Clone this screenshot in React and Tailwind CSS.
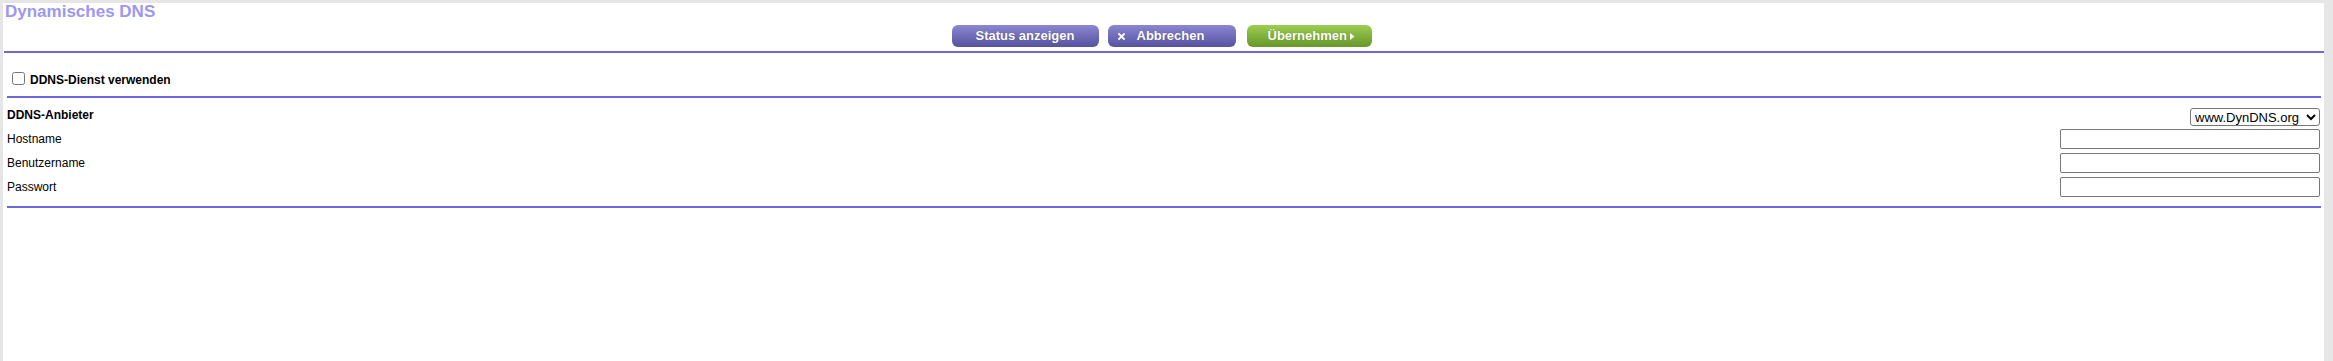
import React from "react";

const font = { fontFamily: '"Liberation Sans", Arial, sans-serif' };

export default function App() {
  return (
    <div className="h-[361px] w-[2333px] bg-[#e6e6e6] pt-[3px] pl-[3px] overflow-hidden" style={font}>
      <div className="w-[2321px] h-[358px] bg-white flex flex-col">
        <div className="pl-[2px] h-[18px] text-[17px] leading-[18px] font-bold text-[#9c97f2]">
          Dynamisches DNS
        </div>
        <div className="mt-[4px] h-[22px] flex justify-center pr-[4px]">
          <button className="w-[147px] h-[22px] rounded-[6px] bg-linear-to-b from-[#8b87d2] to-[#57529f] text-white font-bold text-[13px] leading-[22px] text-center [text-shadow:0_0_1px_rgba(0,0,0,0.35)]">
            Status anzeigen
          </button>
          <button className="ml-[9px] w-[128px] h-[22px] rounded-[6px] bg-linear-to-b from-[#8b87d2] to-[#57529f] text-white font-bold text-[13px] leading-[22px] flex items-center pl-[10px] [text-shadow:0_0_1px_rgba(0,0,0,0.35)]">
            <svg width="7" height="7" viewBox="0 0 7 7" className="mr-[12px]">
              <path d="M1 1 L6 6 M6 1 L1 6" stroke="white" strokeWidth="1.8" strokeLinecap="square" />
            </svg>
            Abbrechen
          </button>
          <button className="ml-[11px] w-[125px] h-[22px] rounded-[6px] bg-linear-to-b from-[#9dcd50] to-[#67972a] text-white font-bold text-[13px] leading-[22px] flex items-center pl-[21px] [text-shadow:0_0_1px_rgba(0,0,0,0.3)]">
            Übernehmen
            <svg width="5" height="7" viewBox="0 0 5 7" className="ml-[3px] mt-[1px]">
              <path d="M0 0 L4.5 3.5 L0 7 Z" fill="white" />
            </svg>
          </button>
        </div>
        <div className="mt-[4px] ml-[1px] h-[2px] bg-[#6e67db]" />
        <div className="pt-[19px] pl-[9px] flex items-end h-[34px]">
          <input type="checkbox" className="m-0 mb-[2px] w-[13px] h-[13px]" />
          <span className="ml-[5px] text-[12px] leading-[14px] font-bold text-black">DDNS-Dienst verwenden</span>
        </div>
        <div className="mt-[9px] ml-[4px] mr-[3px] h-[2px] bg-[#6e67db]" />
        <div className="mt-[10px] ml-[4px] mr-[4px] flex flex-col text-[12px] leading-[14px] text-black">
          <div className="h-[18px] flex justify-between items-start">
            <span className="font-bold">DDNS-Anbieter</span>
            <select className="h-[18px] w-[130px] border border-[#767676] rounded-[3px] bg-white text-[13px] leading-[16px] text-black">
              <option>www.DynDNS.org</option>
            </select>
          </div>
          <div className="mt-[3px] h-[20px] flex justify-between items-center">
            <span>Hostname</span>
            <input type="text" className="w-[260px] h-[20px] border border-[#767676] rounded-[2px] bg-white" />
          </div>
          <div className="mt-[4px] h-[20px] flex justify-between items-center">
            <span>Benutzername</span>
            <input type="text" className="w-[260px] h-[20px] border border-[#767676] rounded-[2px] bg-white" />
          </div>
          <div className="mt-[4px] h-[20px] flex justify-between items-center">
            <span>Passwort</span>
            <input type="password" className="w-[260px] h-[20px] border border-[#767676] rounded-[2px] bg-white" />
          </div>
        </div>
        <div className="mt-[9px] ml-[4px] mr-[3px] h-[2px] bg-[#6e67db]" />
      </div>
    </div>
  );
}
